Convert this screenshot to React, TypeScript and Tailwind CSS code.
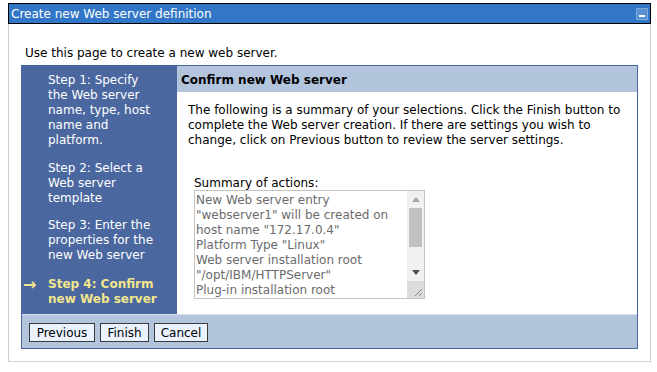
import React from "react";

function ScrollArrow({ up, color }: { up: boolean; color: string }) {
  return (
    <div className="h-[17px] flex items-center justify-center">
      <svg width="8" height="5" viewBox="0 0 8 5">
        {up ? (
          <polygon points="0,5 8,5 4,0" fill={color} />
        ) : (
          <polygon points="0,0 8,0 4,5" fill={color} />
        )}
      </svg>
    </div>
  );
}

export default function App() {
  const summary = [
    "New Web server entry",
    '"webserver1" will be created on',
    'host name "172.17.0.4"',
    'Platform Type "Linux"',
    "Web server installation root",
    '"/opt/IBM/HTTPServer"',
    "Plug-in installation root",
  ];
  return (
    <div className="w-[657px] h-[372px] bg-white font-['DejaVu_Sans',sans-serif] text-[12px] leading-[15px] text-black overflow-hidden">
      <div className="ml-[8px] pt-[3px] w-[643px]">
        {/* Title bar */}
        <div className="h-[21px] border border-black bg-[#3277C7] flex items-center justify-between pl-[2px] pr-[2px] text-white">
          <span className="pt-[2px]">Create new Web server definition</span>
          <div className="w-[12px] h-[12px] bg-[#5B91D3] border border-[#7FA9DD] flex items-end justify-center pb-[2px]">
            <div className="w-[6px] h-[2px] bg-white" />
          </div>
        </div>
        {/* Card body */}
        <div className="border-x border-b border-[#CFCFCF] px-[12px] pb-[12px]">
          <p className="pt-[22px] mb-[4px] pl-[4px]">Use this page to create a new web server.</p>
          <div className="border border-[#4A66A0] h-[284px] flex flex-col">
            <div className="flex h-[248px]">
              {/* Sidebar */}
              <div className="w-[155px] bg-[#4B67A0] text-white pt-[7px]">
                <div className="flex">
                  <div className="w-[26px]" />
                  <div>
                    Step 1: Specify<br />the Web server<br />name, type, host<br />name and<br />platform.
                  </div>
                </div>
                <div className="flex mt-[13px]">
                  <div className="w-[26px]" />
                  <div>
                    Step 2: Select a<br />Web server<br />template
                  </div>
                </div>
                <div className="flex mt-[12px]">
                  <div className="w-[26px]" />
                  <div>
                    Step 3: Enter the<br />properties for the<br />new Web server
                  </div>
                </div>
                <div className="flex mt-[14px] text-[#F2E68C] font-bold">
                  <div className="w-[26px] pl-[1px] text-[16px] leading-[15px]">→</div>
                  <div>
                    Step 4: Confirm<br />new Web server
                  </div>
                </div>
              </div>
              {/* Content */}
              <div className="flex-1 bg-white">
                <div className="h-[26px] bg-[#B3C4DD] flex items-center pl-[4px] pt-[2px] font-bold">
                  Confirm new Web server
                </div>
                <p className="mt-[11px] pl-[11px]">
                  The following is a summary of your selections. Click the Finish button to
                  <br />
                  complete the Web server creation. If there are settings you wish to
                  <br />
                  change, click on Previous button to review the server settings.
                </p>
                <div className="pl-[17px] mt-[27px]">
                  <div className="h-[15px] pt-[1px]">Summary of actions:</div>
                  <div className="w-[231px] h-[109px] border border-[#C4C4C4] flex bg-white">
                    <div className="flex-1 pl-[1px] pt-[2px] text-[#6B6B6B] overflow-hidden whitespace-nowrap">
                      {summary.map((l, i) => (
                        <div key={i}>{l}</div>
                      ))}
                    </div>
                    <div className="w-[17px] flex flex-col">
                      <div className="flex-1 bg-[#F1F1F1] flex flex-col">
                        <ScrollArrow up color="#A3A3A3" />
                        <div className="flex-1">
                          <div className="mx-[2px] h-[39px] bg-[#C1C1C1]" />
                        </div>
                        <ScrollArrow up={false} color="#505050" />
                      </div>
                      <div className="h-[17px] bg-[#DCDCDC] flex items-end justify-end">
                        <svg width="17" height="17" viewBox="0 0 17 17">
                          <line x1="15" y1="8" x2="8" y2="15" stroke="#8A8A8A" strokeWidth="1" />
                          <line x1="15" y1="12" x2="12" y2="15" stroke="#8A8A8A" strokeWidth="1" />
                        </svg>
                      </div>
                    </div>
                  </div>
                </div>
              </div>
            </div>
            {/* Footer */}
            <div className="h-[34px] bg-[#B3C4DD] border-t border-[#D6DFEC] pt-[8px] pl-[7px] flex gap-[5px] items-start">
              <button className="w-[66px] h-[19px] bg-[#EAF2FE] border border-[#3A3A3A] pt-[1px] leading-[16px] text-center text-black">
                Previous
              </button>
              <button className="w-[49px] h-[19px] bg-[#EAF2FE] border border-[#3A3A3A] pt-[1px] leading-[16px] text-center text-black">
                Finish
              </button>
              <button className="w-[54px] h-[19px] bg-[#EAF2FE] border border-[#3A3A3A] pt-[1px] leading-[16px] text-center text-black">
                Cancel
              </button>
            </div>
          </div>
        </div>
      </div>
    </div>
  );
}
